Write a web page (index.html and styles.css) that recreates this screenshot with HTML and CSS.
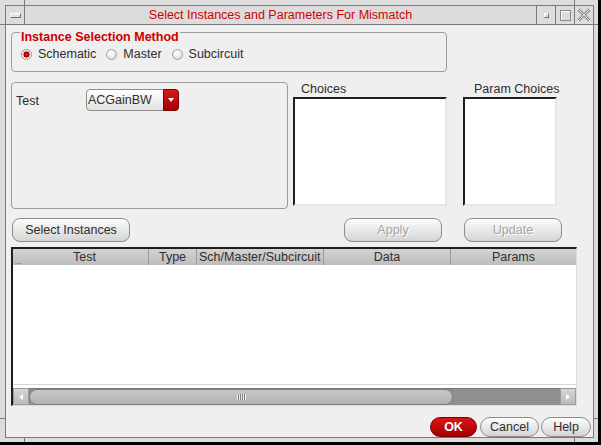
FILE: index.html
```html
<!DOCTYPE html>
<html>
<head>
<meta charset="utf-8">
<title>Select Instances and Parameters For Mismatch</title>
<link rel="stylesheet" href="styles.css">
</head>
<body>
<div class="window">
  <span class="tick tick-v tick-top tl"></span>
  <span class="tick tick-v tick-top tr"></span>
  <span class="tick tick-v tick-bottom tl"></span>
  <span class="tick tick-v tick-bottom tr"></span>
  <span class="tick tick-h tick-left tt"></span>
  <span class="tick tick-h tick-left tb"></span>
  <span class="tick tick-h tick-right tt"></span>
  <span class="tick tick-h tick-right tb"></span>
  <div class="frame">
    <div class="titlebar">
      <div class="tb-menu"><span class="menu-glyph"></span></div>
      <div class="tb-title">Select Instances and Parameters For Mismatch</div>
      <div class="tb-btn"><span class="min-glyph"></span></div>
      <div class="tb-btn"><span class="max-glyph"></span></div>
      <div class="tb-btn">
        <svg class="close-glyph" width="14" height="14" viewBox="0 0 14 14">
          <path d="M1.5 1.5L12.5 12.5M12.5 1.5L1.5 12.5" stroke="#8c8c8c" stroke-width="3" fill="none"/>
          <path d="M1.5 1.5L12.5 12.5M12.5 1.5L1.5 12.5" stroke="#ececec" stroke-width="1" fill="none"/>
        </svg>
      </div>
    </div>
    <div class="content">
      <div class="group method">
        <div class="legend">Instance Selection Method</div>
        <div class="radios">
          <span class="radio"><span class="dot on"></span>Schematic</span>
          <span class="radio"><span class="dot"></span>Master</span>
          <span class="radio"><span class="dot"></span>Subcircuit</span>
        </div>
      </div>

      <div class="top-row">
        <div class="group test-box">
          <div class="field">
            <span class="field-label">Test</span>
            <div class="combo">
              <span class="combo-text">ACGainBW</span>
              <span class="combo-arrow"><span class="tri-down"></span></span>
            </div>
          </div>
        </div>
        <div class="list-col choices">
          <div class="list-label">Choices</div>
          <div class="listbox"></div>
        </div>
        <div class="list-col params">
          <div class="list-label">Param Choices</div>
          <div class="listbox"></div>
        </div>
      </div>

      <div class="btn-row">
        <button class="btn btn-select">Select Instances</button>
        <button class="btn btn-dim btn-apply">Apply</button>
        <button class="btn btn-dim btn-update">Update</button>
      </div>

      <div class="table">
        <div class="thead">
          <div class="th th-first"><span class="sort-mark"></span>Test</div>
          <div class="th">Type</div>
          <div class="th th-left">Sch/Master/Subcircuit</div>
          <div class="th">Data</div>
          <div class="th">Params</div>
        </div>
        <div class="tbody"></div>
        <div class="hscroll">
          <div class="sb-btn"><span class="tri-left"></span></div>
          <div class="sb-track">
            <div class="sb-thumb"><span class="grip"></span></div>
          </div>
          <div class="sb-btn"><span class="tri-right"></span></div>
        </div>
      </div>

      <div class="footer">
        <button class="btn btn-ok">OK</button>
        <button class="btn btn-cancel">Cancel</button>
        <button class="btn btn-help">Help</button>
      </div>
    </div>
  </div>
</div>
</body>
</html>
```

FILE: styles.css
```css
html, body {
  margin: 0;
  padding: 0;
}

body {
  background: #dcdcdc;
  font-family: "Liberation Sans", Arial, sans-serif;
  font-size: 12.5px;
  color: #2e2e2e;
}

.window {
  position: relative;
  width: 601px;
  height: 445px;
  box-sizing: border-box;
  border-right: 3px solid #000;
  border-bottom: 3px solid #000;
  padding: 5px 0 0 5px;
  background: #dcdcdc;
}

/* resize-corner marks of the window frame */
.tick {
  position: absolute;
  background: #7a7a7a;
}
.tick-v { width: 1px; }
.tick-h { height: 1px; }
.tick-top { top: 0; height: 5px; }
.tick-bottom { top: 438px; height: 4px; }
.tick-v.tl { left: 24px; }
.tick-v.tr { left: 574px; }
.tick-left { left: 0; width: 5px; }
.tick-right { left: 594px; width: 4px; }
.tick-h.tt { top: 24px; }
.tick-h.tb { top: 418px; }

.frame {
  width: 589px;
  height: 433px;
  box-sizing: border-box;
  border: 1px solid #7a7a7a;
  display: flex;
  flex-direction: column;
}

/* ---------- title bar ---------- */
.titlebar {
  flex: none;
  height: 19px;
  box-sizing: border-box;
  border-bottom: 1px solid #7a7a7a;
  display: flex;
  background: #dcdcdc;
}

.tb-menu {
  width: 19px;
  box-sizing: border-box;
  border-right: 1px solid #7a7a7a;
  display: flex;
  align-items: center;
  justify-content: center;
}

.menu-glyph {
  width: 9px;
  height: 3px;
  margin-left: 1px;
  border: 1px solid;
  border-color: #ffffff #6e6e6e #6e6e6e #ffffff;
  background: #e4e4e4;
}

.tb-title {
  flex: 1;
  text-align: center;
  color: #d00000;
  line-height: 18px;
  white-space: nowrap;
}

.tb-btn {
  width: 19px;
  box-sizing: border-box;
  border-left: 1px solid #7a7a7a;
  display: flex;
  align-items: center;
  justify-content: center;
}

.min-glyph {
  width: 3px;
  height: 3px;
  border: 1px solid;
  border-color: #ffffff #6e6e6e #6e6e6e #ffffff;
  background: #e4e4e4;
}

.max-glyph {
  width: 9px;
  height: 9px;
  border: 1px solid #8a8a8a;
  box-shadow: inset 1px 1px 0 #ffffff;
}

.close-glyph {
  display: block;
}

/* ---------- content ---------- */
.content {
  flex: 1;
  background: #efefef;
  display: flex;
  flex-direction: column;
  align-items: flex-start;
}

.group {
  border: 1px solid #9c9c9c;
  border-radius: 4px;
  box-sizing: border-box;
}

.method {
  margin: 7px 0 0 5px;
  width: 436px;
  height: 40px;
  display: flex;
  flex-direction: column;
  align-items: flex-start;
}

.legend {
  margin: -3px 0 0 8px;
  padding: 0 1px;
  background: #efefef;
  color: #cc0000;
  font-weight: bold;
  line-height: 14px;
  white-space: nowrap;
}

.radios {
  display: flex;
  gap: 10px;
  margin: 3px 0 0 9px;
  line-height: 14px;
}

.radio {
  display: flex;
  align-items: center;
  white-space: nowrap;
}

.dot {
  width: 11px;
  height: 11px;
  box-sizing: border-box;
  border-radius: 50%;
  border: 1px solid #a0a0a0;
  background: radial-gradient(circle at 40% 35%, #ffffff 0, #f3f3f3 35%, #cdcdcd 100%);
  margin-right: 6px;
}

.dot.on {
  border-color: #9a9a9a;
  background: radial-gradient(circle at 50% 50%, #ff2a2a 0, #d00000 1.5px, #8c0000 2.8px, #f2f2f2 3.3px, #d0d0d0 100%);
}

/* ---------- top row ---------- */
.top-row {
  display: flex;
  align-items: flex-start;
  margin: 10px 0 0 5px;
}

.test-box {
  width: 277px;
  height: 127px;
  padding: 6px 4px;
}

.field {
  display: flex;
  align-items: center;
}

.field-label {
  width: 70px;
  padding-top: 3px;
  line-height: 15px;
}

.combo {
  width: 93px;
  height: 22px;
  box-sizing: border-box;
  border: 1px solid #8e8e8e;
  border-radius: 4px;
  background: linear-gradient(#ffffff, #e2e2e2);
  display: flex;
}

.combo-text {
  flex: 1;
  padding-left: 1px;
  line-height: 20px;
  white-space: nowrap;
}

.combo-arrow {
  width: 16px;
  margin: -1px -1px -1px 0;
  box-sizing: border-box;
  border: 1px solid #7c0000;
  border-radius: 0 4px 4px 0;
  background: linear-gradient(#d81a1a, #a60000);
  display: flex;
  align-items: center;
  justify-content: center;
}

.tri-down {
  width: 0;
  height: 0;
  border-left: 3px solid transparent;
  border-right: 3px solid transparent;
  border-top: 4px solid #ffffff;
}

.list-col {
  display: flex;
  flex-direction: column;
}

.choices {
  margin-left: 5px;
  width: 154px;
}

.params {
  margin-left: 16px;
  width: 94px;
}

.list-label {
  line-height: 15px;
  white-space: nowrap;
}

.choices .list-label { padding-left: 8px; }
.params .list-label { padding-left: 11px; }

.listbox {
  height: 109px;
  box-sizing: border-box;
  background: #ffffff;
  border: 2px solid;
  border-color: #1e1e1e #e6e6e6 #e6e6e6 #1e1e1e;
}

/* ---------- buttons ---------- */
.btn {
  font: inherit;
  color: #2e2e2e;
  border: 1px solid #8c8c8c;
  border-radius: 8px;
  background: linear-gradient(#fdfdfd, #d4d4d4);
  padding: 0;
  box-sizing: border-box;
  white-space: nowrap;
}

.btn-row {
  display: flex;
  margin-top: 9px;
}

.btn-row .btn { height: 24px; }

.btn-select {
  margin-left: 6px;
  width: 118px;
}

.btn-apply {
  margin-left: 214px;
  width: 98px;
}

.btn-update {
  margin-left: 22px;
  width: 98px;
}

.btn-dim {
  color: #a4a4a4;
  text-shadow: 1px 1px 0 #ffffff;
}

/* ---------- table ---------- */
.table {
  margin: 5px 0 0 5px;
  width: 566px;
  height: 159px;
  box-sizing: border-box;
  border-style: solid;
  border-width: 2px 1px 1px 2px;
  border-color: #1e1e1e #dcdcdc #dcdcdc #1e1e1e;
  background: #ffffff;
  display: flex;
  flex-direction: column;
}

.thead {
  display: grid;
  grid-template-columns: 136px 48px 127px 127px 1fr;
  height: 16px;
  background: linear-gradient(#d3d3d3, #bdbdbd);
  line-height: 16px;
}

.th {
  position: relative;
  text-align: center;
  border-right: 1px solid #9a9a9a;
  box-sizing: border-box;
  white-space: nowrap;
  overflow: hidden;
}

.th:last-child { border-right: 0; }

.th-first { padding-left: 8px; }

.th-left {
  text-align: left;
  padding-left: 2px;
}

.sort-mark {
  position: absolute;
  left: 2px;
  bottom: 1px;
  width: 7px;
  height: 1px;
  background: #9a9a9a;
}

.tbody {
  height: 119px;
  border-bottom: 1px solid #d6d6d6;
}

.hscroll {
  margin-top: 3px;
  height: 17px;
  display: flex;
}

.sb-btn {
  width: 16px;
  box-sizing: border-box;
  background: linear-gradient(#d6d6d6, #bababa);
  border: 1px solid #9a9a9a;
  display: flex;
  align-items: center;
  justify-content: center;
}

.tri-left {
  width: 0;
  height: 0;
  border-top: 3px solid transparent;
  border-bottom: 3px solid transparent;
  border-right: 4px solid #ffffff;
}

.tri-right {
  width: 0;
  height: 0;
  border-top: 3px solid transparent;
  border-bottom: 3px solid transparent;
  border-left: 4px solid #ffffff;
}

.sb-track {
  flex: 1;
  background: #8f8f8f;
  border-top: 1px solid #7a7a7a;
  display: flex;
}

.sb-thumb {
  width: 424px;
  height: 16px;
  box-sizing: border-box;
  border: 1px solid #7e7e7e;
  border-radius: 8px;
  background: linear-gradient(#c8c8c8, #b2b2b2);
  display: flex;
  align-items: center;
  justify-content: center;
}

.grip {
  width: 9px;
  height: 6px;
  background: repeating-linear-gradient(90deg, #f0f0f0 0 1px, #7e7e7e 1px 2px);
}

/* ---------- footer ---------- */
.footer {
  align-self: stretch;
  display: flex;
  justify-content: flex-end;
  margin-top: 11px;
  padding-right: 2px;
}

.footer .btn {
  height: 20px;
  border-radius: 10px;
}

.btn-ok {
  width: 47px;
  color: #ffffff;
  font-weight: bold;
  border-color: #7a0000;
  background: linear-gradient(#dc1414, #a00000);
}

.btn-cancel {
  width: 59px;
  margin-left: 3px;
}

.btn-help {
  width: 50px;
  margin-left: 2px;
}
```
